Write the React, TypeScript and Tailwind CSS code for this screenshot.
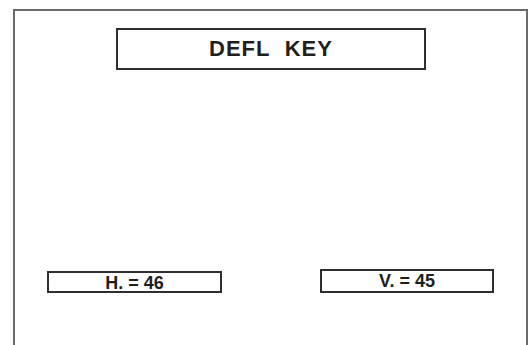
import React from 'react';

const App: React.FC = () => {
  return (
    <div className="w-[528px] h-[345px] bg-white pt-[9px] pl-[13px] overflow-hidden font-['Liberation_Sans',Arial,sans-serif]">
      {/* Outer frame */}
      <div className="h-[340px] border-l-2 border-t-2 border-r-2 border-[#6b6b6b] flex flex-col">
        {/* Title */}
        <div className="mt-[17px] ml-[101px] w-[310px] h-[42px] border-2 border-[#2e2e2e] flex items-center justify-center">
          <span className="text-[22px] font-bold tracking-[1px] text-[#1f1f1f] leading-none">DEFL&nbsp; KEY</span>
        </div>

        {/* Readouts */}
        <div className="mt-[199px] flex items-start">
          <div className="mt-[2px] ml-[32px] w-[175px] h-[22px] border-2 border-[#2e2e2e] flex items-center justify-center">
            <span className="text-[18px] font-bold text-[#1f1f1f] leading-none pt-[1px]">H. = 46</span>
          </div>
          <div className="ml-[98px] w-[174px] h-[24px] border-2 border-[#2e2e2e] flex items-center justify-center">
            <span className="text-[18px] font-bold text-[#1f1f1f] leading-none">V. = 45</span>
          </div>
        </div>
      </div>
    </div>
  );
};

export default App;
